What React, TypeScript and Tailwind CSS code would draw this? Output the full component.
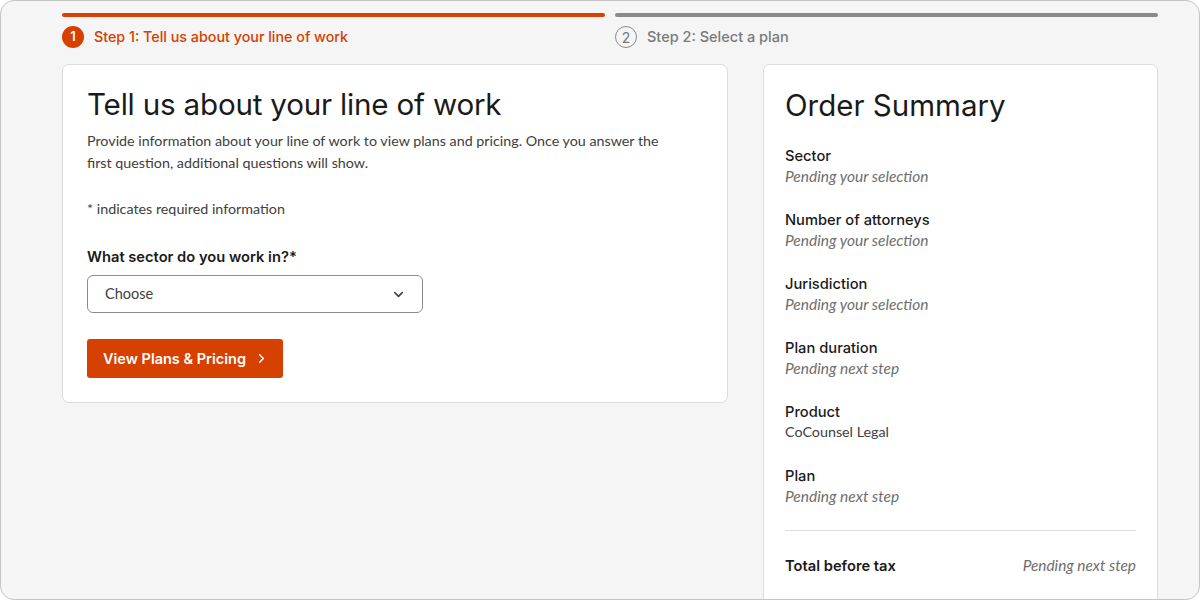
import React from "react";

const headFont = { fontFamily: "Inter, 'Liberation Sans', sans-serif" };
const bodyFont = { fontFamily: "Lato, 'Liberation Sans', sans-serif" };

interface SummaryItem {
  label: string;
  value: string;
  pending: boolean;
}

const summaryItems: SummaryItem[] = [
  { label: "Sector", value: "Pending your selection", pending: true },
  { label: "Number of attorneys", value: "Pending your selection", pending: true },
  { label: "Jurisdiction", value: "Pending your selection", pending: true },
  { label: "Plan duration", value: "Pending next step", pending: true },
  { label: "Product", value: "CoCounsel Legal", pending: false },
  { label: "Plan", value: "Pending next step", pending: true },
];

const StepHeader: React.FC = () => (
  <div className="flex gap-[10px] pt-[12px]">
    <div className="flex-1">
      <div className="h-[4px] rounded-full bg-[#d64000]" />
      <div className="mt-[9px] flex items-center gap-[10px]">
        <span
          className="flex h-[22px] w-[22px] items-center justify-center rounded-full bg-[#d64000] text-[13px] font-semibold text-white"
          style={headFont}
        >
          1
        </span>
        <span className="text-[14.3px] font-medium text-[#d64000]" style={headFont}>
          Step 1: Tell us about your line of work
        </span>
      </div>
    </div>
    <div className="flex-1">
      <div className="h-[4px] rounded-full bg-[#8a8a8a]" />
      <div className="mt-[9px] flex items-center gap-[10px]">
        <span
          className="flex h-[22px] w-[22px] items-center justify-center rounded-full border-[1.5px] border-[#8a8a8a] text-[14px] text-[#777]"
          style={headFont}
        >
          2
        </span>
        <span className="text-[14.5px] font-medium text-[#7a7a7a]" style={headFont}>
          Step 2: Select a plan
        </span>
      </div>
    </div>
  </div>
);

const WorkCard: React.FC = () => (
  <div className="h-[339px] w-[666px] rounded-[7px] border border-[#dcdcdc] bg-white px-[24px] pt-[21px]">
    <h1 className="text-[29.6px] leading-[36px] font-normal tracking-[-0.2px] text-[#1a1a1a]" style={headFont}>
      Tell us about your line of work
    </h1>
    <p className="mt-[8px] max-w-[590px] text-[14.3px] leading-[22px] text-[#404040]" style={bodyFont}>
      Provide information about your line of work to view plans and pricing. Once you answer the
      first question, additional questions will show.
    </p>
    <p className="mt-[24px] text-[14.3px] leading-[22px] text-[#404040]" style={bodyFont}>
      * indicates required information
    </p>
    <label className="mt-[26px] block text-[14.7px] font-semibold text-[#1a1a1a]" style={headFont}>
      What sector do you work in?*
    </label>
    <div className="mt-[7px] flex h-[38px] w-[336px] items-center justify-between rounded-[6px] border border-[#8c8c8c] pr-[16px] pl-[17px]">
      <span className="text-[14.5px] text-[#404040]" style={bodyFont}>
        Choose
      </span>
      <svg className="h-[15px] w-[15px] text-[#404040]" viewBox="0 0 24 24" fill="none" stroke="currentColor" strokeWidth={2.5} strokeLinecap="round" strokeLinejoin="round">
        <path d="M6 9l6 6 6-6" />
      </svg>
    </div>
    <button
      className="mt-[26px] flex h-[39px] w-[196px] items-center gap-[8px] rounded-[3px] bg-[#d64000] pl-[16px] text-[14.5px] font-semibold text-white"
      style={headFont}
    >
      View Plans &amp; Pricing
      <svg className="h-[15px] w-[15px]" viewBox="0 0 24 24" fill="none" stroke="currentColor" strokeWidth={2.5} strokeLinecap="round" strokeLinejoin="round">
        <path d="M9 6l6 6-6 6" />
      </svg>
    </button>
  </div>
);

const OrderSummary: React.FC = () => (
  <div className="h-[560px] w-[395px] rounded-[7px] border border-[#dcdcdc] bg-white px-[21px] pt-[22px]">
    <h2 className="text-[29.5px] leading-[36px] font-normal text-[#1a1a1a]" style={headFont}>
      Order Summary
    </h2>
    <div className="mt-[23px] flex flex-col gap-[24px]">
      {summaryItems.map((item) => (
        <div key={item.label}>
          <div className="text-[14.7px] leading-[20px] font-medium text-[#1a1a1a]" style={headFont}>
            {item.label}
          </div>
          <div
            className={`leading-[20px] ${item.pending ? "text-[15.5px] italic text-[#6e6e6e]" : "text-[14.3px] text-[#404040]"}`}
            style={bodyFont}
          >
            {item.value}
          </div>
        </div>
      ))}
    </div>
    <div className="mt-[24px] h-px bg-[#dcdcdc]" />
    <div className="mt-[23px] flex items-center justify-between">
      <span className="text-[14.7px] font-semibold text-[#1a1a1a]" style={headFont}>
        Total before tax
      </span>
      <span className="text-[15.4px] italic text-[#6e6e6e]" style={bodyFont}>
        Pending next step
      </span>
    </div>
  </div>
);

export default function App() {
  return (
    <div className="h-[600px] w-[1200px] overflow-hidden rounded-[14px] border border-[#c4c4c4] bg-[#f4f5f4]">
      <div className="ml-[61px] w-[1096px]">
        <StepHeader />
        <div className="mt-[16px] flex justify-between">
          <WorkCard />
          <OrderSummary />
        </div>
      </div>
    </div>
  );
}
